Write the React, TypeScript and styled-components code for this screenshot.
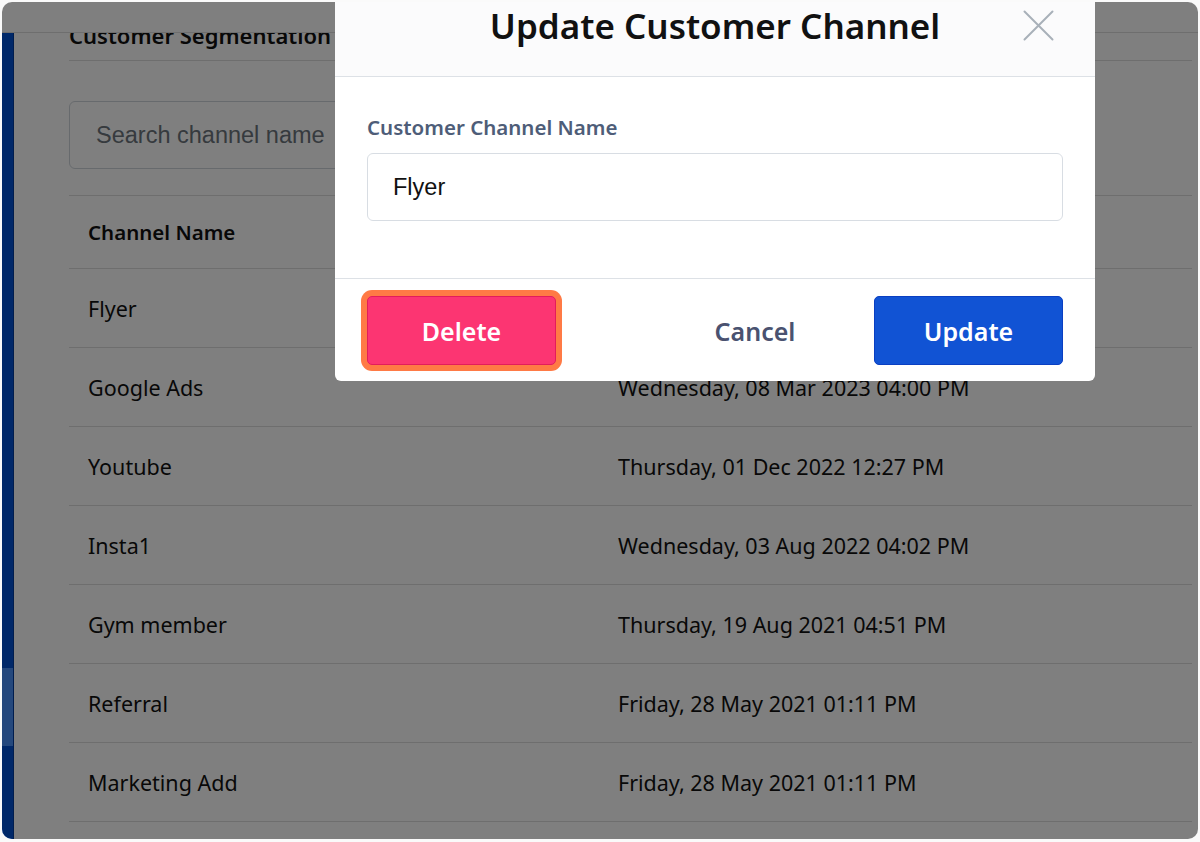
import React from "react";
import styled, { createGlobalStyle } from "styled-components";

const channels = [
  { name: "Flyer", date: "" },
  { name: "Google Ads", date: "Wednesday, 08 Mar 2023 04:00 PM" },
  { name: "Youtube", date: "Thursday, 01 Dec 2022 12:27 PM" },
  { name: "Insta1", date: "Wednesday, 03 Aug 2022 04:02 PM" },
  { name: "Gym member", date: "Thursday, 19 Aug 2021 04:51 PM" },
  { name: "Referral", date: "Friday, 28 May 2021 01:11 PM" },
  { name: "Marketing Add", date: "Friday, 28 May 2021 01:11 PM" },
];

const GlobalStyle = createGlobalStyle`
  html, body {
    margin: 0;
    padding: 0;
    background: #fafafa;
    font-family: "Noto Sans", "Open Sans", sans-serif;
  }
  * { box-sizing: border-box; }
`;

const Frame = styled.div`
  position: relative;
  margin: 2px;
  width: 1196px;
  height: 837px;
  border-radius: 10px;
  overflow: hidden;
  background: #ffffff;
  display: flex;
  flex-direction: column;
`;

const TopBar = styled.header`
  height: 31px;
  flex-shrink: 0;
  background: #ffffff;
  border-bottom: 1px solid #dcdcdc;
  position: relative;
  z-index: 1;
`;

const Shell = styled.div`
  flex: 1;
  display: flex;
  min-height: 0;
`;

const Sidebar = styled.nav`
  width: 12px;
  flex-shrink: 0;
  background: #0050d2;
  border-right: 1px solid #003a9c;
  display: flex;
  flex-direction: column;
  padding-top: 635px;
`;

const NavItem = styled.div<{ $active?: boolean }>`
  height: 78px;
  background: ${(p) => (p.$active ? "#4890fa" : "transparent")};
`;

const Main = styled.main`
  flex: 1;
  overflow: hidden;
  padding: 0 6px 0 55px;
`;

const Heading = styled.h2`
  margin: -16px 0 0;
  padding-bottom: 7px;
  font-size: 22px;
  font-weight: 600;
  line-height: 36px;
  color: #111;
  border-bottom: 1px solid #dcdcdc;
  white-space: nowrap;
`;

const SearchBox = styled.input`
  display: block;
  margin: 40px 0 26px;
  width: 440px;
  height: 68px;
  padding: 0 26px;
  border: 1px solid #ced4da;
  border-radius: 6px;
  font-family: "Liberation Sans", Arial, sans-serif;
  font-size: 23.5px;
  color: #212529;
  &::placeholder { color: #6c757d; }
`;

const Table = styled.div`
  border-top: 1px solid #dcdcdc;
`;

const Row = styled.div<{ $head?: boolean }>`
  display: grid;
  grid-template-columns: 530px 1fr;
  align-items: center;
  height: ${(p) => (p.$head ? "73px" : "79px")};
  border-bottom: 1px solid #dcdcdc;
  font-size: ${(p) => (p.$head ? "20.5px" : "21.5px")};
  font-weight: ${(p) => (p.$head ? 600 : 400)};
  color: #111;
`;

const Cell = styled.div`
  padding-left: 19px;
  white-space: nowrap;
`;

const Overlay = styled.div`
  position: absolute;
  inset: 0;
  background: rgba(0, 0, 0, 0.5);
  z-index: 2;
`;

const Modal = styled.div`
  position: absolute;
  left: 333px;
  top: 0;
  width: 760px;
  background: #ffffff;
  border-radius: 0 0 6px 6px;
  z-index: 3;
  overflow: hidden;
`;

const ModalHeader = styled.div`
  position: relative;
  height: 75px;
  background: #fbfbfc;
  border-bottom: 1px solid #dde1e6;
  display: flex;
  justify-content: center;
`;

const Title = styled.h1`
  margin: 0;
  font-size: 35px;
  font-weight: 600;
  line-height: 48px;
  color: #111;
`;

const CloseButton = styled.button`
  position: absolute;
  right: 41px;
  top: 8px;
  width: 31px;
  height: 31px;
  padding: 0;
  border: none;
  background: none;
  display: flex;
`;

const ModalBody = styled.div`
  padding: 37px 32px 57px;
`;

const Label = styled.label`
  display: block;
  font-size: 20.5px;
  font-weight: 600;
  line-height: 26px;
  color: #4e5d78;
`;

const TextInput = styled.input`
  display: block;
  width: 100%;
  height: 68px;
  margin-top: 13px;
  padding: 0 25px;
  border: 1px solid #d8dde3;
  border-radius: 6px;
  font-family: "Liberation Sans", Arial, sans-serif;
  font-size: 23.5px;
  color: #111;
`;

const ModalFooter = styled.div`
  border-top: 1px solid #dde1e6;
  padding: 17px 32px 16px;
  display: flex;
  justify-content: space-between;
  align-items: center;
`;

const RightGroup = styled.div`
  display: flex;
  align-items: center;
  gap: 39px;
`;

const Button = styled.button<{ $variant: "danger" | "primary" | "plain" }>`
  height: 69px;
  width: ${(p) => (p.$variant === "plain" ? "160px" : "189px")};
  border-radius: 5px;
  font-family: "Noto Sans", "Open Sans", sans-serif;
  font-size: 25px;
  font-weight: 600;
  cursor: pointer;
  border: 1px solid
    ${(p) =>
      p.$variant === "danger" ? "#e21d5c" : p.$variant === "primary" ? "#0a3fc2" : "transparent"};
  background: ${(p) =>
    p.$variant === "danger" ? "#fc3572" : p.$variant === "primary" ? "#1153d4" : "transparent"};
  color: ${(p) => (p.$variant === "plain" ? "#4a5270" : "#ffffff")};
  box-shadow: ${(p) => (p.$variant === "danger" ? "0 0 0 6px #ff7a45" : "none")};
`;

export default function App() {
  return (
    <>
      <GlobalStyle />
      <Frame>
        <TopBar />
        <Shell>
          <Sidebar>
            <NavItem $active />
          </Sidebar>
          <Main>
            <Heading>Customer Segmentation</Heading>
            <SearchBox placeholder="Search channel name" />
            <Table>
              <Row $head>
                <Cell>Channel Name</Cell>
                <Cell>Created At</Cell>
              </Row>
              {channels.map((c) => (
                <Row key={c.name}>
                  <Cell>{c.name}</Cell>
                  <Cell>{c.date}</Cell>
                </Row>
              ))}
            </Table>
          </Main>
        </Shell>
        <Overlay />
        <Modal>
          <ModalHeader>
            <Title>Update Customer Channel</Title>
            <CloseButton aria-label="Close">
              <svg width="31" height="31" viewBox="0 0 31 31">
                <path d="M1.5 1.5L29.5 29.5M29.5 1.5L1.5 29.5" stroke="#a8b0b9" strokeWidth="2" strokeLinecap="round" />
              </svg>
            </CloseButton>
          </ModalHeader>
          <ModalBody>
            <Label>Customer Channel Name</Label>
            <TextInput defaultValue="Flyer" />
          </ModalBody>
          <ModalFooter>
            <Button $variant="danger">Delete</Button>
            <RightGroup>
              <Button $variant="plain">Cancel</Button>
              <Button $variant="primary">Update</Button>
            </RightGroup>
          </ModalFooter>
        </Modal>
      </Frame>
    </>
  );
}
